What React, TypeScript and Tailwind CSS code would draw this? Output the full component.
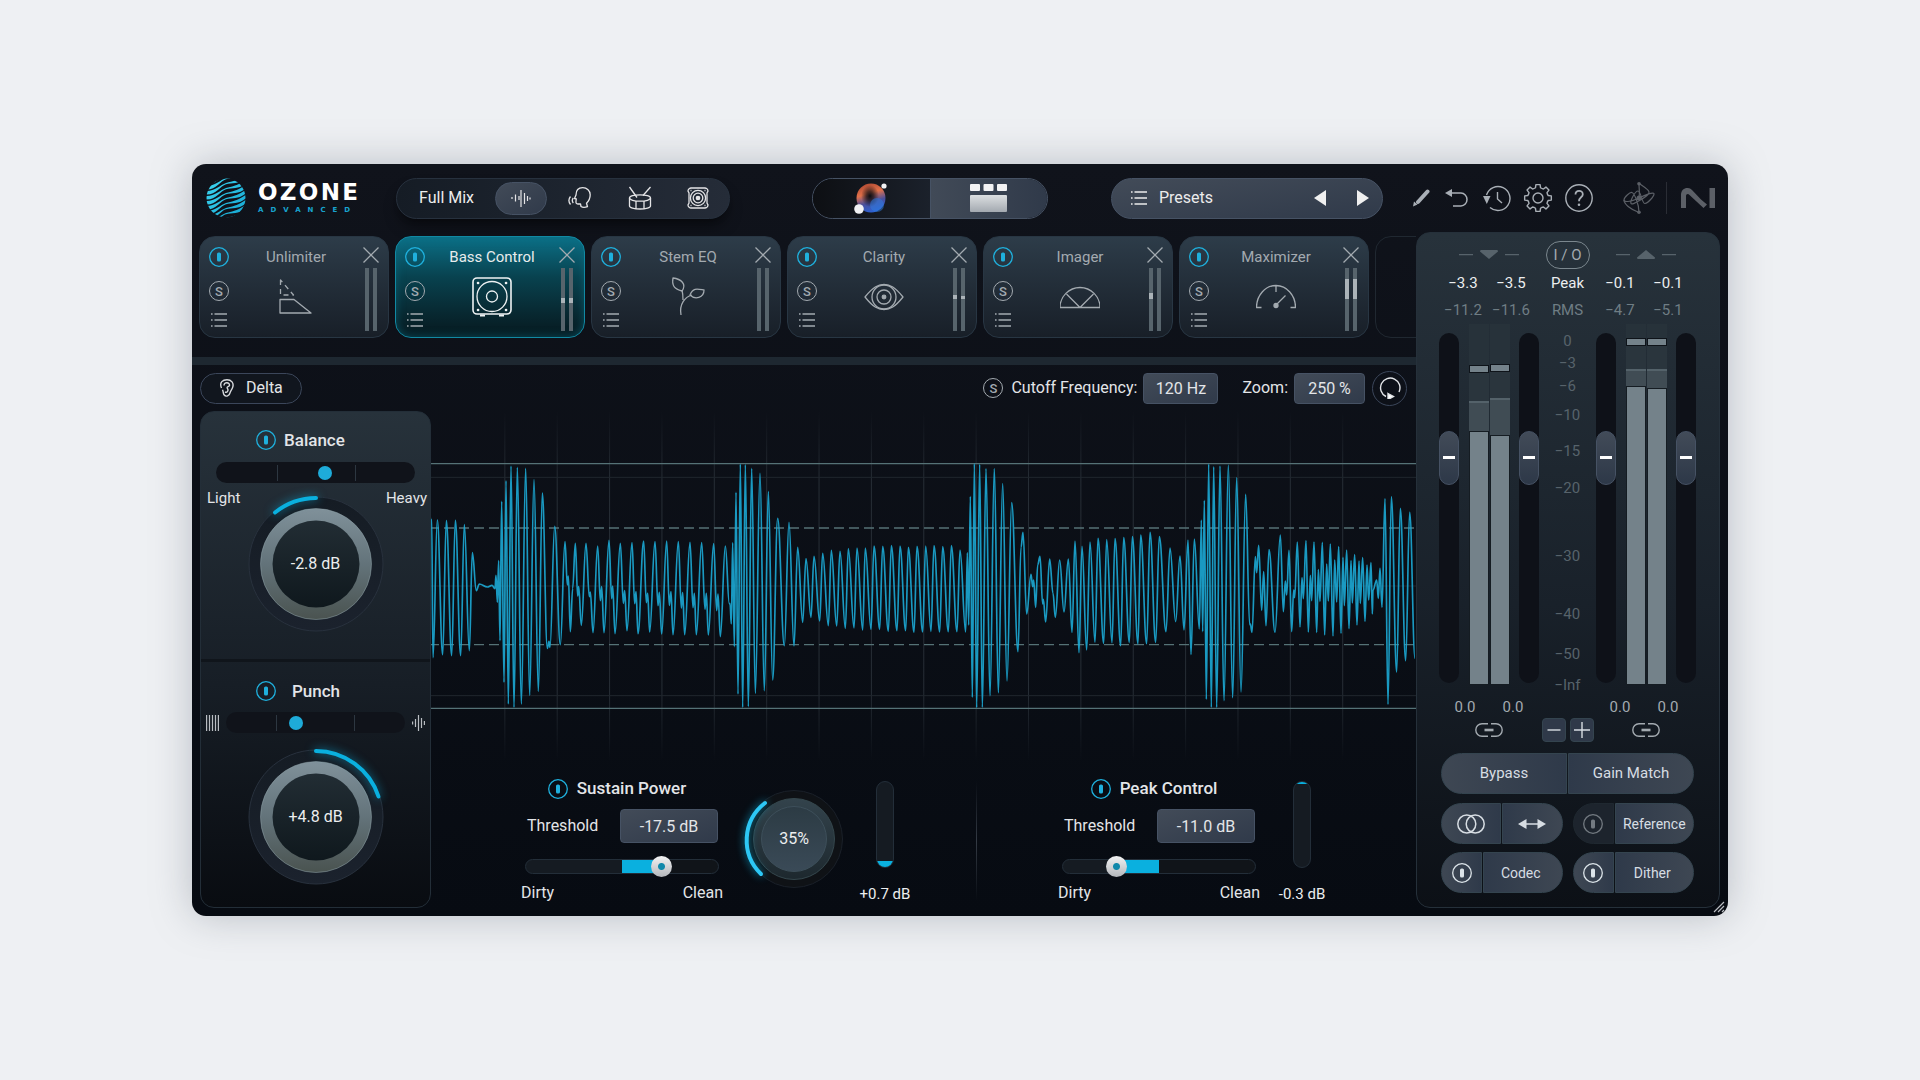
import type { ReactNode } from "react";

const waveform: [number, number][] = [
  [5, 265], [9, 683], [22, 270], [38, 674], [49, 272], [65, 677], [76, 271], [92, 677], [103, 284], [118, 662],
  [127, 368], [139, 482], [148, 462], [172, 471], [186, 466], [195, 476], [198, 436], [202, 517], [206, 392], [210, 632],
  [215, 214], [222, 757], [228, 152], [235, 822], [243, 108], [252, 832], [262, 112], [274, 822], [287, 115], [299, 796],
  [312, 149], [325, 784], [337, 189], [352, 655], [357, 634], [360, 652], [374, 289], [391, 644], [405, 335], [412, 465],
  [415, 438], [421, 605], [428, 475], [436, 340], [443, 498], [446, 470], [454, 586], [468, 340], [478, 500], [481, 486],
  [489, 608], [503, 348], [511, 512], [515, 470], [522, 608], [537, 331], [545, 506], [548, 468], [555, 611], [571, 340],
  [580, 520], [584, 482], [591, 602], [606, 338], [614, 521], [618, 485], [624, 611], [641, 333], [649, 518], [653, 490],
  [659, 606], [675, 335], [684, 527], [688, 487], [695, 612], [710, 333], [718, 526], [723, 485], [729, 614], [745, 335],
  [754, 534], [758, 488], [764, 614], [780, 337], [789, 533], [793, 490], [799, 614], [815, 338], [825, 538], [829, 490],
  [835, 615], [851, 341], [860, 542], [864, 492], [871, 620], [886, 348], [898, 522], [900, 520], [904, 582], [908, 338],
  [913, 650], [918, 187], [924, 792], [931, 102], [938, 832], [946, 104], [955, 830], [965, 115], [976, 790], [990, 130],
  [1003, 782], [1015, 185], [1028, 750], [1043, 265], [1063, 647], [1077, 277], [1092, 648], [1103, 352], [1118, 577], [1128, 386],
  [1143, 562], [1152, 379], [1169, 573], [1178, 370], [1195, 587], [1204, 361], [1220, 588], [1230, 364], [1246, 595], [1255, 356],
  [1272, 594], [1281, 354], [1298, 600], [1306, 354], [1323, 598], [1332, 348], [1349, 598], [1358, 349], [1375, 604], [1384, 347],
  [1401, 602], [1410, 348], [1427, 602], [1435, 352], [1452, 607], [1461, 349], [1478, 606], [1487, 348], [1503, 604], [1512, 347],
  [1529, 606], [1538, 350], [1555, 605], [1564, 347], [1581, 605], [1590, 360], [1607, 606], [1612, 368], [1616, 585], [1621, 199],
  [1627, 802], [1633, 101], [1640, 833], [1649, 103], [1657, 832], [1668, 116], [1680, 797], [1693, 116], [1705, 788], [1718, 161],
  [1731, 753], [1745, 218], [1764, 665], [1773, 352], [1779, 307], [1790, 552], [1803, 433], [1808, 470], [1811, 450], [1817, 532],
  [1823, 405], [1830, 379], [1838, 522], [1840, 508], [1847, 576], [1859, 387], [1869, 490], [1876, 562], [1889, 390], [1902, 546],
  [1915, 387], [1926, 607], [1935, 333], [1947, 668], [1956, 349], [1970, 660], [1980, 336], [1995, 637], [2004, 325], [2021, 640],
  [2030, 329], [2046, 638], [2055, 326], [2072, 647], [2081, 323], [2098, 637], [2107, 320], [2124, 641], [2132, 315], [2150, 641],
  [2160, 307], [2177, 637], [2188, 320], [2208, 605], [2220, 354], [2237, 575], [2250, 378], [2262, 600], [2274, 330], [2283, 674],
  [2293, 327], [2308, 597], [2314, 270], [2318, 605], [2323, 211], [2329, 808], [2336, 102], [2344, 832], [2351, 110], [2360, 832],
  [2370, 108], [2382, 812], [2395, 105], [2408, 803], [2420, 143], [2433, 786], [2447, 193], [2459, 584], [2461, 582], [2466, 607],
  [2476, 380], [2480, 428], [2486, 346], [2495, 541], [2501, 425], [2508, 587], [2517, 359], [2535, 607], [2551, 315], [2560, 545],
  [2566, 453], [2570, 495], [2577, 361], [2585, 605], [2591, 480], [2594, 503], [2602, 336], [2610, 591], [2616, 443], [2620, 506],
  [2628, 332], [2635, 606], [2641, 436], [2645, 512], [2652, 336], [2660, 607], [2665, 419], [2670, 514], [2677, 337], [2684, 615],
  [2690, 402], [2695, 513], [2701, 342], [2709, 618], [2714, 390], [2720, 516], [2726, 350], [2733, 610], [2739, 382], [2743, 527],
  [2750, 360], [2757, 596], [2763, 392], [2767, 519], [2774, 374], [2781, 585], [2787, 393], [2791, 520], [2798, 383], [2805, 574],
  [2811, 405], [2816, 510], [2823, 398], [2827, 552], [2829, 480], [2840, 450], [2845, 505], [2850, 415], [2856, 532], [2865, 206],
  [2874, 823], [2884, 200], [2900, 726], [2911, 235], [2927, 692], [2939, 247], [2955, 685],
];

const wavePath = waveform
  .map(([x, y], i) => {
    if (i === 0) return `M${x} ${y}`;
    const [px, py] = waveform[i - 1];
    const dx = (x - px) * 0.4;
    return `C${px + dx} ${py} ${x - dx} ${y} ${x} ${y}`;
  })
  .join("");

const gridLines = Array.from({ length: 17 }, (_, i) => 223 + i * 157.1);

const gearPath =
  Array.from({ length: 8 }, (_, i) => {
    const at = (r: number, deg: number) => {
      const a = ((i * 45 + deg - 90) * Math.PI) / 180;
      return `${(15 + r * Math.cos(a)).toFixed(2)} ${(15 + r * Math.sin(a)).toFixed(2)}`;
    };
    return `${i === 0 ? "M" : "L"}${at(10.5, -14)}L${at(13.5, -9)}L${at(13.5, 9)}L${at(10.5, 14)}Q${at(10, 22.5)} ${at(10.5, 31)}`;
  }).join("") + "Z";

const surface = "border border-[#465264] bg-linear-to-br from-[#424b58] to-[#303a4a]";
const pillPart = "flex h-[41px] items-center justify-center border border-[#34444f] text-[#d7dde3]";

function PowerIcon({ className = "text-[#1fb0dd]" }: { className?: string }) {
  return (
    <svg className={`size-5 shrink-0 ${className}`} viewBox="0 0 20 20">
      <circle cx="10" cy="10" r="9.3" fill="none" stroke="currentColor" strokeWidth="1.3" />
      <rect x="8" y="5.5" width="4" height="9" rx="1.6" fill="currentColor" />
    </svg>
  );
}

function SoloIcon() {
  return (
    <span className="flex size-5 shrink-0 items-center justify-center rounded-full border border-[#a3aab0] text-[13px] leading-none font-medium text-[#a3aab0]">
      S
    </span>
  );
}

function ListIcon({ className = "" }: { className?: string }) {
  return (
    <svg className={`h-[14px] w-4 ${className}`} viewBox="0 0 16 14" fill="none" stroke="currentColor" strokeWidth="1.3">
      <path d="M3.5 1H16M3.5 7H16M3.5 13H16" />
      <path d="M0 1h1.6M0 7h1.6M0 13h1.6" />
    </svg>
  );
}

function Logo() {
  return (
    <a href="#" className="flex items-center gap-3">
      <svg className="h-10 w-10" viewBox="0 0 40 40">
        <defs>
          <clipPath id="ball">
            <circle cx="20" cy="20" r="19.5" />
          </clipPath>
          <linearGradient id="ballFill" gradientUnits="userSpaceOnUse" x1="0" y1="0" x2="40" y2="40">
            <stop offset="0" stopColor="#3fd8f3" />
            <stop offset="1" stopColor="#12a4d0" />
          </linearGradient>
        </defs>
        <g clipPath="url(#ball)" fill="url(#ballFill)">
          {[3, 8, 13, 18, 23, 28, 33, 38, 43, 48, 53].map((y) => (
            <path
              key={y}
              d={`M-1 ${y}C8 ${y + 1} 14 ${y - 6} 20 ${y - 8}S30 ${y - 9} 41 ${y - 17}L41 ${y - 13.6}C33 ${y - 6} 26 ${y - 8.500} 20 ${y - 6.800}S10 ${y + 4.500} -1 ${y + 3.400}Z`}
            />
          ))}
        </g>
      </svg>
      <span className="flex w-[102px] flex-col font-['DejaVu_Sans'] font-bold">
        <span className="text-[23px] leading-5 tracking-widest text-white">OZONE</span>
        <span className="mt-1 text-[7px] leading-2 tracking-[1em] text-[#18a3cf]">ADVANCED</span>
      </span>
    </a>
  );
}

function SourceBar() {
  return (
    <div className="ml-9 flex h-[41px] w-[334px] items-center rounded-full border border-[#27313e] bg-linear-to-r from-[#151c25] to-[#252c38] pl-[22px] shadow-lg shadow-black/40">
      <span className="w-[76px] text-base text-[#ececec]">Full Mix</span>
      <button aria-label="All" className={`flex h-[33px] w-[52px] items-center justify-center rounded-full ${surface}`}>
        <svg className="size-5" viewBox="0 0 20 20" stroke="#e4e4e6" strokeWidth="1.2">
          <path d="M1 9v2M4.5 6.500v7M8 8v4M10 2v17M13.500 5v11M16.5 8v5M19 9.500v2" />
        </svg>
      </button>
      <button aria-label="Vocals" className="flex w-[66px] justify-center">
        <svg className="size-6" viewBox="0 0 24 24" fill="none" stroke="#e4e4e6" strokeWidth="1.300" strokeLinejoin="round">
          <path d="M8 9L6.500 12.500 8.300 13l-.3 2c-.2 2 .2 3 2 3h2.500l.5 2.500c1.500 1 4 1 6.500.2l-1-3.500c3-3 3.700-5.500 3.700-8.500 0-4-3.200-7-7.500-7S8 4.500 8 9z" />
          <path d="M5.300 12c-1.200 1.500-1.200 3.500 0 5M2.500 10.500c-2 2.500-2 5.500 0 8" />
        </svg>
      </button>
      <button aria-label="Drums" className="flex w-[54px] justify-center">
        <svg className="size-6" viewBox="0 0 24 24" fill="none" stroke="#e4e4e6" strokeWidth="1.300">
          <ellipse cx="12" cy="12" rx="10.500" ry="3.200" />
          <path d="M1.500 12v8c0 1.500 4.500 3 10.500 3s10.500-1.500 10.500-3v-8M8 15v7.500M16 15v7.500M1.500 1L9 11.500M22.500 1L15 9.500" />
        </svg>
      </button>
      <button aria-label="Bass" className="flex w-[62px] justify-center">
        <svg className="size-[22px]" viewBox="0 0 22 22" fill="none" stroke="#e4e4e6" strokeWidth="1.300">
          <path d="M4 1h14c1 0 3 1 3 3l-1 2v10l1 2c0 2-2 3-3 3H4c-1 0-3-1-3-3l1-2V6L1 4c0-2 2-3 3-3z" />
          <circle cx="11" cy="11" r="7.600" />
          <circle cx="11" cy="11" r="4.800" />
          <circle cx="11" cy="11" r="1.700" fill="#e4e4e6" />
          <path d="M3.500 3.500h1M17.500 3.500h1M3.500 18.500h1M17.500 18.500h1" />
        </svg>
      </button>
    </div>
  );
}

function ViewToggle() {
  return (
    <div className="ml-[82px] flex h-[41px] w-[236px] overflow-hidden rounded-full border border-[#465264]">
      <button aria-label="Assistant view" className="flex flex-1 items-center justify-center bg-linear-to-r from-[#0d0f13] to-[#1b212b]">
        <svg className="h-8 w-9" viewBox="0 0 36 32">
          <defs>
            <linearGradient id="orb" x1="0.3" y1="0" x2="0.6" y2="1">
              <stop offset="0" stopColor="#b04a32" />
              <stop offset="0.35" stopColor="#e2714a" />
              <stop offset="0.65" stopColor="#4a4f9c" />
              <stop offset="1" stopColor="#2a63d8" />
            </linearGradient>
            <radialGradient id="core">
              <stop offset="0" stopColor="#0c0d12" />
              <stop offset="0.4" stopColor="#0c0d12" stopOpacity="0.7" />
              <stop offset="1" stopColor="#0c0d12" stopOpacity="0" />
            </radialGradient>
          </defs>
          <circle cx="18" cy="16" r="14.500" fill="url(#orb)" />
          <ellipse cx="17" cy="14" rx="9" ry="11" fill="url(#core)" />
          <circle cx="24" cy="23" r="7" fill="#2f7de0" opacity="0.5" />
          <circle cx="6" cy="27" r="4.800" fill="#f1f1f3" />
          <circle cx="31" cy="4" r="2.600" fill="#f1f1f3" />
        </svg>
      </button>
      <button
        aria-label="Module view"
        className="flex flex-1 items-center justify-center border-l border-[#465264] bg-linear-to-r from-[#414a57] to-[#303a4a]"
      >
        <svg className="h-7 w-[37px]" viewBox="0 0 37 28">
          <defs>
            <linearGradient id="tile" x1="0" y1="0" x2="0" y2="1">
              <stop offset="0" stopColor="#dcdfe1" />
              <stop offset="1" stopColor="#a3a9b0" />
            </linearGradient>
          </defs>
          <rect x="0" y="0" width="10" height="7" rx="1" fill="#f3f3f4" />
          <rect x="13.500" y="0" width="10" height="7" rx="1" fill="#f3f3f4" />
          <rect x="27" y="0" width="10" height="7" rx="1" fill="#f3f3f4" />
          <rect x="0" y="11" width="37" height="17" rx="1" fill="url(#tile)" />
        </svg>
      </button>
    </div>
  );
}

function PresetBar() {
  return (
    <div className={`ml-[63px] flex h-[41px] w-[272px] items-center rounded-full pr-[13px] pl-[19px] text-[#ececec] ${surface}`}>
      <button className="flex flex-1 items-center gap-3 text-base">
        <ListIcon />
        Presets
      </button>
      <button aria-label="Previous preset" className="mr-[31px]">
        <svg className="h-4 w-3" viewBox="0 0 12 16" fill="#f0f0f0">
          <path d="M12 0v16L0 8z" />
        </svg>
      </button>
      <button aria-label="Next preset">
        <svg className="h-4 w-3" viewBox="0 0 12 16" fill="#f0f0f0">
          <path d="M0 0v16l12-8z" />
        </svg>
      </button>
    </div>
  );
}

function HeaderTools() {
  return (
    <div className="ml-auto flex items-center pr-[13px] text-[#a9afb6]">
      <button aria-label="Edit">
        <svg className="h-[18px] w-[17px]" viewBox="0 0 17 18">
          <path d="M5 13L14.500 2.500" stroke="currentColor" strokeWidth="4" strokeLinecap="round" />
          <path d="M0 17.500l1-5 3.500 3z" fill="currentColor" />
        </svg>
      </button>
      <button aria-label="Undo" className="ml-[15px]">
        <svg className="h-[18px] w-[23px]" viewBox="0 0 23 18" fill="none" stroke="currentColor" strokeWidth="1.500">
          <path d="M6 4h10a6 6.500 0 0 1 0 13H8" />
          <path d="M0 4l7-4v8z" fill="currentColor" stroke="none" />
        </svg>
      </button>
      <button aria-label="History" className="ml-[15px]">
        <svg className="size-7" viewBox="0 0 28 28" fill="none" stroke="currentColor" strokeWidth="1.400">
          <path d="M3.500 11A12 12 0 1 1 7 23.500M14.500 8v7l4.500 4" />
          <path d="M0 12h7.500l-3.700 8z" fill="currentColor" stroke="none" />
        </svg>
      </button>
      <button aria-label="Settings" className="ml-3">
        <svg className="size-[30px]" viewBox="0 0 30 30" fill="none" stroke="currentColor" strokeWidth="1.400" strokeLinejoin="round">
          <path d={gearPath} />
          <circle cx="15" cy="15" r="5" />
        </svg>
      </button>
      <button aria-label="Help" className="ml-3">
        <svg className="size-7" viewBox="0 0 28 28" fill="none" stroke="currentColor" strokeWidth="1.400">
          <circle cx="14" cy="14" r="13.200" />
          <path d="M10.500 10.500c0-5 7.300-4.800 7.300-.3 0 3.200-3.800 3-3.800 7" strokeWidth="1.800" />
          <circle cx="14" cy="20.800" r="1.300" fill="currentColor" stroke="none" />
        </svg>
      </button>
      <svg className="ml-[30px] h-8 w-8 text-[#5c6067]" viewBox="0 0 32 32" fill="none" stroke="currentColor" strokeWidth="1.200">
        <path d="M16 1.500C21 5 27 8 26 11S9 24 8 21.500 12 9 15 9s4 13 7 12.500 9-7 9-9.500-9 1-15 4S1 21 1 18s6-8 8-7.500 7 11 7 20" />
        <path d="M1 18c0 4 6 9 15 12.500M16 1.500c0 6 1 10 0 14.500" />
        <circle cx="16" cy="1.800" r="1.800" fill="currentColor" stroke="none" />
        <circle cx="16" cy="30.200" r="1.800" fill="currentColor" stroke="none" />
        <circle cx="16" cy="16" r="2.500" fill="currentColor" stroke="none" />
      </svg>
      <span className="ml-[11px] h-8 w-px bg-[#2a2d35]" />
      <svg className="ml-[14px] h-5 w-[34px]" viewBox="0 0 34 20" fill="#5c6067">
        <path d="M0 20V7C0 0 7-2 11 2l9 9.500 6 5-3.500 3.500L8.500 7C7 5 5 6 5 8v12zM28.500 0H34v20h-5.500z" />
      </svg>
    </div>
  );
}

function ModuleCard({
  title,
  active = false,
  marks = [],
  children,
}: {
  title: string;
  active?: boolean;
  marks?: [number, number][];
  children: ReactNode;
}) {
  return (
    <article
      className={`grid h-[102px] w-[190px] shrink-0 grid-cols-[20px_1fr_16px] rounded-2xl border px-[9px] pt-[10px] text-[15px] ${
        active
          ? "border-[#1189a3] bg-linear-to-b from-[#0b7087] via-[#08424f] via-40% to-[#06191f] text-[#e8eced] shadow-[inset_0_0_10px_#0b6f8699]"
          : "border-[#283643] bg-linear-to-b from-[#2d3c49] to-[#181f28] text-[#a3aab0]"
      }`}
    >
      <div className="flex flex-col items-center">
        <button aria-label={`${title} on`}>
          <PowerIcon />
        </button>
        <button aria-label={`${title} solo`} className="mt-[14px]">
          <SoloIcon />
        </button>
        <button aria-label={`${title} menu`} className="mt-3 text-[#a3aab0]">
          <ListIcon />
        </button>
      </div>
      <div className="flex flex-col items-center">
        <h2 className="leading-5">{title}</h2>
        <svg
          className="mt-[10px] size-10"
          viewBox="0 0 40 40"
          fill="none"
          stroke={active ? "#eef2f3" : "#a3aab0"}
          strokeWidth="1.300"
          strokeLinejoin="round"
        >
          {children}
        </svg>
      </div>
      <div className="flex flex-col items-center">
        <button aria-label={`Remove ${title}`}>
          <svg className="size-4" viewBox="0 0 16 16" stroke="#a3aab0" strokeWidth="1.300">
            <path d="M.5.5l15 15M15.500.5l-15 15" />
          </svg>
        </button>
        <div className="mt-[5px] flex gap-1">
          {[0, 1].map((i) => (
            <div key={i} className="h-[63px] w-1 bg-[#57646c]">
              {marks[i] && <div className="w-1 bg-[#abb3b8]" style={{ marginTop: marks[i][0], height: marks[i][1] }} />}
            </div>
          ))}
        </div>
      </div>
    </article>
  );
}

function ModuleChain() {
  return (
    <div className="flex h-[121px] gap-1.5 overflow-hidden pt-1 pl-[7px]">
      <ModuleCard title="Unlimiter">
        <path d="M4 22.500h14L35 36H4z" />
        <path d="M4.500 3v15h13z" strokeDasharray="5 4" />
      </ModuleCard>
      <ModuleCard title="Bass Control" active marks={[[30, 5], [30, 5]]}>
        <rect x="1" y="1" width="38" height="36" rx="4" strokeWidth="1.600" />
        <circle cx="20" cy="19.500" r="15" />
        <circle cx="20" cy="19.500" r="5.500" />
        <path d="M6 6h.1M34 6h.1M6 33h.1M34 33h.1" strokeWidth="2.600" strokeLinecap="round" />
        <path d="M8 38.500h5M27 38.500h5" strokeWidth="2" />
      </ModuleCard>
      <ModuleCard title="Stem EQ">
        <path d="M13 38C11 27 17 20 24 18M15 23c0-4 0-6-1-10" />
        <path d="M14 14C4 12 4 6 5 1c8 1 14 6 9 13zM22 18c3-8 8-6 14-5 0 8-9 10-14 5z" />
      </ModuleCard>
      <ModuleCard title="Clarity" marks={[[27, 4], [28, 3]]}>
        <path d="M1 20C9 10 14 7.500 20 7.500S31 10 39 20c-8 10-13 12.500-19 12.500S9 30 1 20z" />
        <circle cx="20" cy="20" r="12" />
        <circle cx="20" cy="20" r="7" />
        <circle cx="20" cy="20" r="1.800" fill="#a3aab0" />
      </ModuleCard>
      <ModuleCard title="Imager" marks={[[25, 6]]}>
        <path d="M0 30.500a20 20 0 0 1 40 0zM6.500 17L20 30.500 33.500 17" />
      </ModuleCard>
      <ModuleCard title="Maximizer" marks={[[11, 20], [11, 20]]}>
        <path d="M5.500 30.500H.5a19.500 22 0 0 1 39 0h-5M20 9v6M20 28l9.500-9.500" />
        <circle cx="20" cy="28.500" r="2" fill="#a3aab0" />
      </ModuleCard>
      <div className="h-[102px] w-[190px] shrink-0 rounded-2xl border border-[#202831]" />
    </div>
  );
}

function ValueBox({ label, value, className }: { label: string; value: string; className: string }) {
  return <input aria-label={label} defaultValue={value} className={`rounded-sm text-center text-base text-[#e3e5e8] ${surface} ${className}`} />;
}

function Toolbar() {
  return (
    <div className="flex h-[46px] items-center pr-[9px] pl-2 text-base text-[#e3e5e8]">
      <button className="flex h-[31px] w-[102px] items-center gap-3 rounded-full border border-[#3b465a] bg-[#11161e] pl-[19px]">
        <svg className="h-[18px] w-[14px]" viewBox="0 0 14 18" fill="none" stroke="#d9dbde" strokeWidth="1.400">
          <path d="M1.500 9C-1 3 3 .8 7 .8s7.500 3 5.500 8c-1 2.500-2 3-2.500 5-.5 3-4 4.500-6 2-1-1.500-.5-3-1.500-5" />
          <path d="M4 6.500C4 2.500 10 3 9.500 6.500 9 8 6 7.500 7.500 9.500S7 14 5 13" />
        </svg>
        Delta
      </button>
      <button aria-label="Solo cutoff" className="mr-2 ml-auto">
        <SoloIcon />
      </button>
      <span className="mr-1.5">Cutoff Frequency:</span>
      <ValueBox label="Cutoff Frequency" value="120 Hz" className="mr-6 h-[31px] w-[75px]" />
      <span className="mr-1.5">Zoom:</span>
      <ValueBox label="Zoom" value="250 %" className="mr-[7px] h-[31px] w-[71px]" />
      <button aria-label="Reset" className="flex size-[35px] items-center justify-center rounded-full border border-[#3b465a]">
        <svg className="size-[22px]" viewBox="0 0 22 22" fill="none" stroke="#e3e5e8" strokeWidth="1.400">
          <path d="M7 19.500A9.700 9.700 0 1 1 20 15" />
          <path d="M9 16.500l5.500 3-5.500 3z" fill="#fff" />
        </svg>
      </button>
    </div>
  );
}

function Dial({ id, label, value, arc }: { id: string; label: string; value: string; arc: string }) {
  return (
    <div className="relative flex size-[134px] items-center justify-center">
      <svg className="absolute inset-0 size-full overflow-visible" viewBox="0 0 134 134" fill="none">
        <defs>
          <linearGradient id={`${id}Rim`} x1="0" y1="0" x2="0" y2="1">
            <stop offset="0" stopColor="#80919a" />
            <stop offset="0.500" stopColor="#63737a" />
            <stop offset="1" stopColor="#4a5350" />
          </linearGradient>
          <linearGradient id={`${id}Face`} x1="0" y1="0" x2="0" y2="1">
            <stop offset="0" stopColor="#222d34" />
            <stop offset="1" stopColor="#0f181d" />
          </linearGradient>
          <linearGradient id={`${id}Well`} x1="0" y1="0" x2="0" y2="1">
            <stop offset="0" stopColor="#151c24" />
            <stop offset="1" stopColor="#1b222d" />
          </linearGradient>
        </defs>
        <circle cx="67" cy="67" r="67" fill={`url(#${id}Well)`} stroke="#28313d" />
        <circle cx="67" cy="67" r="55.500" fill={`url(#${id}Rim)`} stroke="#8fa3aa" strokeOpacity="0.500" />
        <circle cx="67" cy="67" r="43.500" fill={`url(#${id}Face)`} />
        <path d={arc} stroke="#0ab0df" strokeWidth="4" strokeLinecap="round" className="drop-shadow-[0_0_5px_#0ab0dfaa]" />
      </svg>
      <output className="relative text-base text-[#eceeef]">{value}</output>
      <input type="range" aria-label={label} className="absolute inset-0 cursor-pointer opacity-0" />
    </div>
  );
}

const dotRange =
  "h-[14px] w-full appearance-none bg-transparent [&::-webkit-slider-thumb]:size-[14px] [&::-webkit-slider-thumb]:appearance-none [&::-webkit-slider-thumb]:rounded-full [&::-webkit-slider-thumb]:bg-[#1eabd9]";
const tickTrack =
  "flex h-[21px] items-center rounded-full bg-[#10131a] bg-[linear-gradient(#2d3741,#2d3741),linear-gradient(#2d3741,#2d3741)] bg-[length:1px_16px] bg-no-repeat";

function BassPanel() {
  return (
    <aside className="flex w-[231px] shrink-0 flex-col rounded-[14px] border border-[#232e38] bg-linear-to-b from-[#27323b] via-[#171e26] via-55% to-[#090c11] text-[15px] text-[#e3e5e8]">
      <section className="h-[247px] pt-4">
        <div className="flex items-center gap-2 pl-[55px]">
          <button aria-label="Balance on">
            <PowerIcon />
          </button>
          <h2 className="w-16 text-[17px] leading-6 font-medium">Balance</h2>
        </div>
        <div className={`mx-[15px] mt-[10px] bg-[position:31%_50%,70%_50%] ${tickTrack}`}>
          <input type="range" aria-label="Balance weight" defaultValue={55} className={dotRange} />
        </div>
        <div className="mt-[5px] grid grid-cols-[1fr_134px_1fr] px-[3px]">
          <span className="pl-[3px] leading-5">Light</span>
          <div className="pt-[9px]">
            <Dial id="balance" label="Balance" value="-2.8 dB" arc="M67 1A66 66 0 0 0 26 15.500" />
          </div>
          <span className="justify-self-end leading-5">Heavy</span>
        </div>
      </section>
      <section className="flex flex-1 flex-col border-t-3 border-[#10151b] pt-[17px]">
        <div className="flex items-center gap-2 pl-[55px]">
          <button aria-label="Punch on">
            <PowerIcon />
          </button>
          <h2 className="w-16 text-center text-[17px] leading-6 font-medium">Punch</h2>
        </div>
        <div className="mt-[9px] flex items-center gap-[7px] px-[5px]">
          <svg className="h-4 w-[13px]" viewBox="0 0 13 16" stroke="#b9bdc2" strokeWidth="1.200">
            <path d="M.6 0v16M3.500 0v16M6.500 0v16M9.500 0v16M12.400 0v16" />
          </svg>
          <div className={`flex-1 bg-[position:28%_50%,72%_50%] ${tickTrack}`}>
            <input type="range" aria-label="Punch amount" defaultValue={38} className={dotRange} />
          </div>
          <svg className="h-4 w-[13px]" viewBox="0 0 13 16" stroke="#b9bdc2" strokeWidth="1.200">
            <path d="M.6 6.500v3M3.500 4v8M6.500 0v16M9.500 3v10M12.400 6v4" />
          </svg>
        </div>
        <div className="mt-[17px] flex justify-center">
          <Dial id="punch" label="Punch" value="+4.8 dB" arc="M67 1A66 66 0 0 1 129.500 46.500" />
        </div>
      </section>
    </aside>
  );
}

function WaveView() {
  return (
    <svg className="block h-[350px] w-full" viewBox="3 -57 2955 1050" preserveAspectRatio="none" fill="none">
      <defs>
        <linearGradient id="fade" gradientUnits="userSpaceOnUse" x1="0" y1="-57" x2="0" y2="993">
          <stop offset="0" stopColor="#262d35" stopOpacity="0" />
          <stop offset="0.200" stopColor="#262d35" />
          <stop offset="0.800" stopColor="#262d35" />
          <stop offset="1" stopColor="#262d35" stopOpacity="0" />
        </linearGradient>
      </defs>
      {gridLines.map((x) => (
        <rect key={x} x={x} y="-57" width="3" height="1050" fill="url(#fade)" />
      ))}
      <path d="M3 142H2958M3 468H2958M3 797H2958" stroke="#20272e" strokeWidth="3" />
      <path d="M3 101H2958M3 835H2958" stroke="#557276" strokeWidth="4" />
      <path d="M-3 294H2958M-3 644H2958" stroke="#557276" strokeWidth="4" strokeDasharray="30 15" />
      <path d={wavePath} stroke="#1ca8d4" strokeWidth="5" strokeOpacity="0.900" />
    </svg>
  );
}

const whiteRange =
  "h-[21px] w-full shrink-0 appearance-none bg-transparent [&::-webkit-slider-thumb]:size-[21px] [&::-webkit-slider-thumb]:appearance-none [&::-webkit-slider-thumb]:rounded-full [&::-webkit-slider-thumb]:bg-[radial-gradient(circle,#1088aa_3px,transparent_4px),linear-gradient(#f2f2f3,#b4b7bb)]";

function DetectorBlock({ title, threshold, mix, fill }: { title: string; threshold: string; mix: number; fill: string }) {
  return (
    <div className="w-[202px] text-base text-[#e3e5e8]">
      <div className="flex h-6 items-center justify-center gap-[9px] pr-[10px]">
        <button aria-label={`${title} on`}>
          <PowerIcon />
        </button>
        <h2 className="text-[17px] font-medium">{title}</h2>
      </div>
      <div className="mt-2 flex items-center justify-between pr-[5px] pl-[6px]">
        <span>Threshold</span>
        <ValueBox label={`${title} threshold`} value={threshold} className="h-[34px] w-[98px]" />
      </div>
      <div className={`mx-1 mt-4 flex h-[15px] items-center rounded-full border border-[#232e39] ${fill}`}>
        <input type="range" aria-label={`${title} character`} defaultValue={mix} className={whiteRange} />
      </div>
      <div className="mt-[7px] flex justify-between leading-6">
        <span>Dirty</span>
        <span>Clean</span>
      </div>
    </div>
  );
}

function GainMeter({ value, children }: { value: string; children: ReactNode }) {
  return (
    <div className="flex w-[52px] flex-col items-center pt-1 text-[15px] whitespace-nowrap text-[#eceeef]">
      <div className="flex h-[87px] w-[18px] flex-col overflow-hidden rounded-full border border-[#232e39] bg-[#151b22]">{children}</div>
      <span className="mt-[14px] leading-6">{value}</span>
    </div>
  );
}

function Detectors() {
  return (
    <div className="flex flex-1 items-start pt-4">
      <section className="flex w-[545px] shrink-0 pl-[90px]">
        <DetectorBlock
          title="Sustain Power"
          threshold="-17.5 dB"
          mix={73}
          fill="bg-[linear-gradient(90deg,#151b22_50%,#0ab0df_50%,#0ab0df_70%,#101419_70%)]"
        />
        <div className="relative mt-[13px] ml-[22px] flex size-[98px] items-center justify-center">
          <svg className="absolute inset-0 size-full overflow-visible" viewBox="0 0 98 98" fill="none">
            <defs>
              <linearGradient id="powerFace" x1="0" y1="0" x2="0" y2="1">
                <stop offset="0" stopColor="#2c3b44" />
                <stop offset="1" stopColor="#3a4a57" />
              </linearGradient>
              <linearGradient id="powerRim" x1="0" y1="0" x2="0" y2="1">
                <stop offset="0" stopColor="#33434c" />
                <stop offset="1" stopColor="#1d282e" />
              </linearGradient>
            </defs>
            <circle cx="49" cy="49" r="48.500" fill="#0f1216" stroke="#1a2029" />
            <circle cx="49" cy="49" r="40.500" fill="url(#powerRim)" stroke="#34464c" />
            <circle cx="49" cy="49" r="32.500" fill="url(#powerFace)" stroke="#3d4f5a" />
            <path
              d="M20 13A47 47 0 0 0 16 84"
              stroke="#2dc7f5"
              strokeWidth="4"
              strokeLinecap="round"
              className="drop-shadow-[0_0_4px_#0ab0dfcc]"
            />
          </svg>
          <output className="relative text-base text-[#eceeef]">35%</output>
          <input type="range" aria-label="Sustain amount" className="absolute inset-0 cursor-pointer opacity-0" />
        </div>
        <div className="ml-4">
          <GainMeter value="+0.7 dB">
            <div className="mt-auto h-[6px] bg-[#0ab0df]" />
          </GainMeter>
        </div>
      </section>
      <span className="mt-1 h-[120px] w-px bg-linear-to-b from-transparent via-[#343b45] to-transparent" />
      <section className="flex pl-[81px]">
        <DetectorBlock
          title="Peak Control"
          threshold="-11.0 dB"
          mix={25}
          fill="bg-[linear-gradient(90deg,#151b22_28%,#0ab0df_28%,#0ab0df_50%,#101419_50%)]"
        />
        <div className="ml-4">
          <GainMeter value="-0.3 dB">
            <div className="h-[2px] bg-[#0ab0df]" />
          </GainMeter>
        </div>
      </section>
    </div>
  );
}

const faderRange =
  "mt-[9px] h-[350px] w-5 appearance-none rounded-full bg-[#0e1118] [direction:rtl] [writing-mode:vertical-lr] [&::-webkit-slider-thumb]:h-[54px] [&::-webkit-slider-thumb]:w-5 [&::-webkit-slider-thumb]:appearance-none [&::-webkit-slider-thumb]:rounded-full [&::-webkit-slider-thumb]:border [&::-webkit-slider-thumb]:border-[#465264] [&::-webkit-slider-thumb]:bg-[linear-gradient(#fff,#fff),linear-gradient(#424b58,#2d3848)] [&::-webkit-slider-thumb]:bg-[length:12px_3px,100%_100%] [&::-webkit-slider-thumb]:bg-center [&::-webkit-slider-thumb]:bg-no-repeat";

function LevelBar({ hold, rms, level }: { hold: number; rms: number; level: number }) {
  return (
    <div className="flex h-[361px] w-5 flex-col">
      <div className="bg-[#27323a]" style={{ height: hold }} />
      <div className="h-2 border border-[#0e1319] bg-[#74828a]" />
      <div className="bg-[#2a353d]" style={{ height: rms - hold - 8 }} />
      <div className="h-[2px] bg-[#54626a]" />
      <div className="bg-[#404c54]" style={{ height: level - rms - 2 }} />
      <div className="flex-1 border border-[#151c22] bg-[#74828a]" />
    </div>
  );
}

function LevelGroup({ name, bars }: { name: string; bars: { hold: number; rms: number; level: number }[] }) {
  return (
    <div className="flex justify-between">
      <input type="range" aria-label={`${name} left gain`} defaultValue={67} className={faderRange} />
      <div className="flex gap-px">
        {bars.map((bar, i) => (
          <LevelBar key={i} {...bar} />
        ))}
      </div>
      <input type="range" aria-label={`${name} right gain`} defaultValue={67} className={faderRange} />
    </div>
  );
}

const scale: [string, number][] = [
  ["0", 17], ["−3", 39], ["−6", 62], ["−10", 91], ["−15", 127], ["−20", 164], ["−30", 232], ["−40", 290], ["−50", 330], ["−Inf", 361],
];

function Pair({ values }: { values: [string, string] }) {
  return (
    <div className="grid w-24 grid-cols-2 text-center">
      <span>{values[0]}</span>
      <span>{values[1]}</span>
    </div>
  );
}

function FlowMark({ up = false }: { up?: boolean }) {
  return (
    <svg className="h-[10px] w-[60px] justify-self-center" viewBox="0 0 60 10" fill="#57636b">
      <path d="M0 4h14v1.300H0zM46 4h14v1.300H46z" />
      <path d={up ? "M30 0l9 7.500c0 1-.5 1.500-1.500 1.500h-15c-1 0-1.500-.5-1.500-1.500z" : "M30 9l9-7.500c0-1-.5-1.500-1.500-1.500h-15c-1 0-1.500.5-1.500 1.500z"} />
    </svg>
  );
}

function LinkButton({ label }: { label: string }) {
  return (
    <button aria-label={label} className="justify-self-center">
      <svg className="h-[14px] w-7" viewBox="0 0 28 14" fill="none" stroke="#a3aab0" strokeWidth="1.400">
        <path d="M13 .8H7a6.200 6.200 0 0 0 0 12.400h6M16 .8h5a6.200 6.200 0 0 1 0 12.400h-5" />
        <path d="M9.500 7h9" strokeWidth="2.600" />
      </svg>
    </button>
  );
}

const ioGrid = "grid grid-cols-[100px_1fr_100px] items-center";

function IoPanel() {
  return (
    <aside className="rounded-[14px] border border-[#25303a] bg-linear-to-b from-[#27323b] via-[#19212a] via-55% to-[#0c1016] pt-2 pr-[23px] pb-[14px] pl-[22px] text-[15px]">
      <div className={`h-7 ${ioGrid}`}>
        <FlowMark />
        <button className="h-7 w-11 justify-self-center rounded-full border border-[#7b878e] text-[#a3aab0]">I / O</button>
        <FlowMark up />
      </div>
      <div className={`h-7 text-[#eceeef] ${ioGrid}`}>
        <Pair values={["−3.3", "−3.5"]} />
        <span className="text-center">Peak</span>
        <Pair values={["−0.1", "−0.1"]} />
      </div>
      <div className={`h-[27px] text-[#6f7d84] ${ioGrid}`}>
        <Pair values={["−11.2", "−11.6"]} />
        <span className="text-center">RMS</span>
        <Pair values={["−4.7", "−5.1"]} />
      </div>
      <div className="grid grid-cols-[100px_1fr_100px]">
        <LevelGroup name="Input" bars={[{ hold: 41, rms: 77, level: 107 }, { hold: 40, rms: 74, level: 111 }]} />
        <div className="relative text-[#57636b]">
          {scale.map(([mark, y]) => (
            <span key={mark} className="absolute inset-x-0 -translate-y-1/2 text-center leading-5" style={{ top: y }}>
              {mark}
            </span>
          ))}
        </div>
        <LevelGroup name="Output" bars={[{ hold: 14, rms: 45, level: 62 }, { hold: 14, rms: 45, level: 64 }]} />
      </div>
      <div className={`mt-[11px] h-[22px] pl-[2px] text-[#a3aab0] ${ioGrid}`}>
        <Pair values={["0.0", "0.0"]} />
        <span />
        <Pair values={["0.0", "0.0"]} />
      </div>
      <div className={`h-6 ${ioGrid}`}>
        <LinkButton label="Link input" />
        <div className="flex justify-center gap-1">
          <button aria-label="Zoom out" className="flex size-6 items-center justify-center rounded-sm border border-[#34444f] bg-[#2f3949]">
            <svg className="size-4" viewBox="0 0 16 16" stroke="#d7dde3" strokeWidth="1.400">
              <path d="M1.500 8h13" />
            </svg>
          </button>
          <button aria-label="Zoom in" className="flex size-6 items-center justify-center rounded-sm border border-[#34444f] bg-[#2f3949]">
            <svg className="size-4" viewBox="0 0 16 16" stroke="#d7dde3" strokeWidth="1.400">
              <path d="M0 8h16M8 0v16" />
            </svg>
          </button>
        </div>
        <LinkButton label="Link output" />
      </div>
      <div className="mx-[2px] mt-[11px] grid grid-cols-2 gap-px">
        <button className={`rounded-l-full bg-linear-to-r from-[#3e4753] to-[#2f3a4a] ${pillPart}`}>Bypass</button>
        <button className={`rounded-r-full bg-linear-to-r from-[#2f3a4a] to-[#3e4753] ${pillPart}`}>Gain Match</button>
      </div>
      <div className="mx-[2px] mt-[9px] grid grid-cols-2 gap-x-[10px] gap-y-2 text-sm">
        <div className="grid grid-cols-2 gap-px">
          <button aria-label="Mono" className={`rounded-l-full bg-linear-to-r from-[#3e4753] to-[#2f3a4a] ${pillPart}`}>
            <svg className="h-5 w-7" viewBox="0 0 28 20" fill="none" stroke="currentColor" strokeWidth="1.500">
              <circle cx="9.800" cy="10" r="9" />
              <circle cx="18.200" cy="10" r="9" />
            </svg>
          </button>
          <button aria-label="Swap channels" className={`rounded-r-full bg-linear-to-r from-[#2f3a4a] to-[#3e4753] ${pillPart}`}>
            <svg className="h-[10px] w-7" viewBox="0 0 28 10" fill="currentColor">
              <path d="M0 5l8.500-5v4.200h11V0L28 5l-8.500 5V5.800h-11V10z" />
            </svg>
          </button>
        </div>
        <div className="grid grid-cols-[41px_1fr] gap-px">
          <button aria-label="Reference on" className="flex items-center justify-center rounded-l-full border border-[#1f2830] bg-[#1d242d]">
            <PowerIcon className="text-[#737a81]" />
          </button>
          <button className={`rounded-r-full bg-linear-to-r from-[#2f3a4a] to-[#3e4753] ${pillPart}`}>Reference</button>
        </div>
        <div className="grid grid-cols-[41px_1fr] gap-px">
          <button aria-label="Codec on" className={`rounded-l-full bg-linear-to-r from-[#3e4753] to-[#2f3a4a] ${pillPart}`}>
            <PowerIcon className="text-[#dbe3e8]" />
          </button>
          <button className={`rounded-r-full bg-linear-to-r from-[#2f3a4a] to-[#3e4753] pr-1 ${pillPart}`}>Codec</button>
        </div>
        <div className="grid grid-cols-[41px_1fr] gap-px">
          <button aria-label="Dither on" className={`rounded-l-full bg-linear-to-r from-[#3e4753] to-[#2f3a4a] ${pillPart}`}>
            <PowerIcon className="text-[#dbe3e8]" />
          </button>
          <button className={`rounded-r-full bg-linear-to-r from-[#2f3a4a] to-[#3e4753] pr-1 ${pillPart}`}>Dither</button>
        </div>
      </div>
    </aside>
  );
}

export default function App() {
  return (
    <main className="flex min-h-screen items-center bg-[#eef0f3] px-[10%] font-[Roboto,sans-serif]">
      <div className="relative w-full rounded-[14px] bg-linear-to-b from-[#10131b] to-[#070b12] pb-2 shadow-[0_0_40px_#6b728066]">
        <header className="flex h-[68px] items-center pl-[14px]">
          <Logo />
          <SourceBar />
          <ViewToggle />
          <PresetBar />
          <HeaderTools />
        </header>
        <div className="grid grid-cols-[minmax(0,1fr)_304px] pr-2">
          <div className="flex flex-col">
            <ModuleChain />
            <div className="mt-1 h-2 bg-[#1e2831]" />
            <Toolbar />
            <div className="flex flex-1 pl-2">
              <BassPanel />
              <div className="flex min-w-0 flex-1 flex-col">
                <WaveView />
                <Detectors />
              </div>
            </div>
          </div>
          <IoPanel />
        </div>
        <svg className="absolute right-[3px] bottom-[3px] size-3" viewBox="0 0 12 12" stroke="#b9bdc2" strokeWidth="1.200">
          <path d="M1 11L11 1M5 11l6-6M9 11l2-2" />
        </svg>
      </div>
    </main>
  );
}
